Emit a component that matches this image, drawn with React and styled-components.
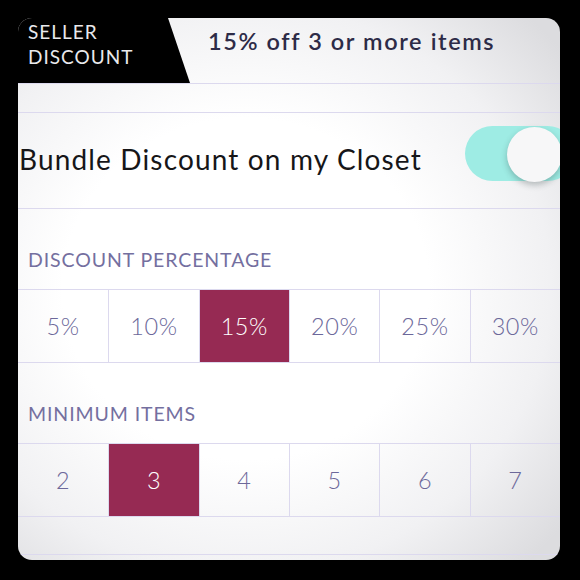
import React from "react";
import styled, { createGlobalStyle } from "styled-components";

const GlobalStyle = createGlobalStyle`
  html, body {
    margin: 0;
    padding: 0;
    background: #000000;
  }
  body {
    font-family: "Lato", "Open Sans", sans-serif;
  }
`;

const Page = styled.div`
  width: 580px;
  height: 580px;
  padding: 18px;
  box-sizing: border-box;
  background: #000000;
`;

const Panel = styled.div`
  width: 542px;
  height: 542px;
  border-radius: 14px;
  overflow: hidden;
  display: flex;
  flex-direction: column;
  background: radial-gradient(
    ellipse 75% 70% at 42% 50%,
    #ffffff 45%,
    #f1f1f3 75%,
    #dcdcdf 100%
  );
`;

const Header = styled.div`
  height: 66px;
  flex: 0 0 66px;
  display: flex;
  align-items: stretch;
  border-bottom: 1px solid #dcd9ee;
  box-sizing: border-box;
`;

const Tab = styled.div`
  width: 172px;
  flex: 0 0 172px;
  background: #000000;
  clip-path: polygon(0 0, 150px 0, 172px 100%, 0 100%);
  color: #e9e9ec;
  font-size: 19px;
  line-height: 25px;
  padding: 1px 0 0 10px;
  box-sizing: border-box;
  letter-spacing: 1px;
`;

const HeaderTitle = styled.div`
  margin-left: 18px;
  padding-top: 9px;
  font-size: 23.5px;
  font-weight: 600;
  color: #2d2b47;
  letter-spacing: 1.6px;
`;

const Spacer = styled.div`
  flex: 0 0 ${(p) => p.h}px;
  border-bottom: ${(p) => (p.line ? "1px solid #dcd9ee" : "none")};
  box-sizing: border-box;
`;

const ToggleRow = styled.div`
  flex: 0 0 96px;
  display: flex;
  align-items: center;
  justify-content: space-between;
  border-bottom: 1px solid #dcd9ee;
  box-sizing: border-box;
  padding-left: 1px;
`;

const ToggleLabel = styled.div`
  font-size: 28px;
  color: #161618;
  margin-top: -4px;
  letter-spacing: 1.15px;
`;

const Toggle = styled.div`
  position: relative;
  width: 110px;
  height: 55px;
  margin-right: -15px;
  margin-top: -14px;
  border-radius: 28px;
  background: #9eece4;
`;

const Knob = styled.div`
  position: absolute;
  top: 1px;
  left: 42px;
  width: 55px;
  height: 55px;
  border-radius: 50%;
  background: #f7f7f8;
  box-shadow: 0 3px 6px rgba(40, 60, 60, 0.3);
`;

const SectionLabel = styled.div`
  flex: 0 0 80px;
  display: flex;
  align-items: flex-end;
  padding: 0 0 19px 10px;
  box-sizing: border-box;
  font-size: 19.5px;
  line-height: 20px;
  color: #746f9f;
  letter-spacing: 0.9px;
`;

const Options = styled.div`
  flex: 0 0 74px;
  display: grid;
  grid-template-columns: repeat(6, 1fr);
  border-top: 1.5px solid #dcd9ee;
  border-bottom: 1.5px solid #dcd9ee;
  box-sizing: border-box;
`;

const Option = styled.div`
  display: flex;
  align-items: center;
  justify-content: center;
  font-size: 23.5px;
  font-weight: 300;
  letter-spacing: 0.6px;
  color: ${(p) => (p.active ? "#ffffff" : "#6c689a")};
  background: ${(p) => (p.active ? "#962a53" : "transparent")};
  border-left: ${(p) => (p.first ? "none" : "1.5px solid #dcd9ee")};
`;

const percents = ["5%", "10%", "15%", "20%", "25%", "30%"];
const items = ["2", "3", "4", "5", "6", "7"];

function OptionRow({ values, selected }) {
  return (
    <Options>
      {values.map((v, i) => (
        <Option key={v} first={i === 0} active={v === selected}>
          {v}
        </Option>
      ))}
    </Options>
  );
}

export default function App() {
  return (
    <Page>
      <GlobalStyle />
      <Panel>
        <Header>
          <Tab>
            SELLER
            <br />
            DISCOUNT
          </Tab>
          <HeaderTitle>15% off 3 or more items</HeaderTitle>
        </Header>
        <Spacer h={29} line />
        <ToggleRow>
          <ToggleLabel>Bundle Discount on my Closet</ToggleLabel>
          <Toggle>
            <Knob />
          </Toggle>
        </ToggleRow>
        <SectionLabel>DISCOUNT PERCENTAGE</SectionLabel>
        <OptionRow values={percents} selected="15%" />
        <SectionLabel>MINIMUM ITEMS</SectionLabel>
        <OptionRow values={items} selected="3" />
        <Spacer h={38} line />
      </Panel>
    </Page>
  );
}
